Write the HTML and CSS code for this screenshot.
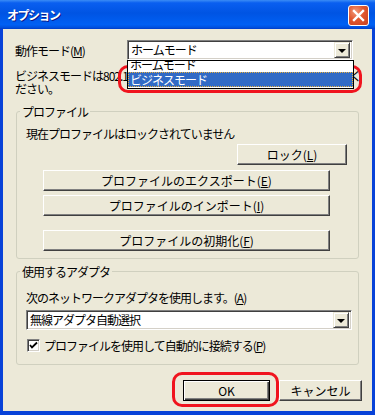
FILE: index.html
```html
<!DOCTYPE html>
<html lang="ja">

<head>
    <meta charset="UTF-8">
    <title>オプション</title>
    <link rel="stylesheet" href="styles.css">
</head>

<body>
    <div class="window">
        <div class="titlebar">
            <span class="title">オプション</span>
            <span class="close">
                <svg width="13" height="13" viewBox="0 0 13 13">
                    <path d="M2 2 L11 11 M11 2 L2 11" stroke="#fff" stroke-width="2.4" stroke-linecap="square" />
                </svg>
            </span>
        </div>
        <div class="client">
            <div class="mode-row">
                <span class="label">動作モード(<u>M</u>)</span>
                <div class="combo mode-combo">
                    <span class="combo-text">ホームモード</span>
                    <span class="combo-btn"><i class="arrow"></i></span>
                    <div class="droplist">
                        <ul>
                            <li>ホームモード</li>
                            <li class="sel">ビジネスモード</li>
                        </ul>
                    </div>
                </div>
            </div>
            <div class="note">
                <div class="note-line">
                    <span class="note-text">ビジネスモードは802.1X認証を使用する場合に選択してく</span>
                    <span>く</span>
                </div>
                <div>ださい。</div>
            </div>

            <fieldset class="group profile">
                <legend>プロファイル</legend>
                <p class="status">現在プロファイルはロックされていません</p>
                <div class="lock-row"><button class="btn lock">ロック(<u>L</u>)</button></div>
                <button class="btn wide export">プロファイルのエクスポート(<u>E</u>)</button>
                <button class="btn wide import">プロファイルのインポート(<u>I</u>)</button>
                <button class="btn wide init">プロファイルの初期化(<u>F</u>)</button>
            </fieldset>

            <fieldset class="group adapter">
                <legend>使用するアダプタ</legend>
                <p class="adapter-text">次のネットワークアダプタを使用します。(<u>A</u>)</p>
                <div class="combo adapter-combo">
                    <span class="combo-text">無線アダプタ自動選択</span>
                    <span class="combo-btn"><i class="arrow"></i></span>
                </div>
                <label class="check-row">
                    <span class="checkbox">
                        <svg width="9" height="9" viewBox="0 0 9 9">
                            <path d="M1 4 L3 6.5 L8 1.5" stroke="#000" stroke-width="1.8" fill="none" />
                        </svg>
                    </span>
                    <span>プロファイルを使用して自動的に接続する(<u>P</u>)</span>
                </label>
            </fieldset>

            <div class="actions">
                <button class="btn ok">OK</button>
                <button class="btn cancel">キャンセル</button>
            </div>
        </div>
        <div class="mark mark-list"></div>
        <div class="mark mark-ok"></div>
    </div>
</body>

</html>
```

FILE: styles.css
```css
body {
    margin: 0;
}

.window {
    width: 375px;
    height: 415px;
    display: flex;
    flex-direction: column;
    position: relative;
    font: 12px "Noto Sans CJK JP", sans-serif;
    letter-spacing: -1px;
    color: #000;
}

.titlebar {
    height: 29px;
    flex: none;
    display: flex;
    align-items: center;
    justify-content: space-between;
    padding: 0 6px 0 7px;
    background: linear-gradient(to bottom, #3b8cf5 0%, #0a5ff0 10%, #0054e3 45%, #0060f4 85%, #0052e0 94%, #003cc8 100%);
}

.title {
    color: #fff;
    font-weight: bold;
    font-size: 12px;
    letter-spacing: -1.5px;
    text-shadow: 1px 1px #0a1a8a;
}

.close {
    width: 19px;
    height: 19px;
    border: 1px solid #fff;
    border-radius: 3px;
    display: flex;
    align-items: center;
    justify-content: center;
    background: radial-gradient(circle at 35% 30%, #f29a7a 0%, #e0572f 45%, #c8401f 100%);
    margin-top: 2px;
}

.client {
    flex: 1;
    background: #ece9d8;
    border: solid #0842d8;
    border-width: 0 3px 4px;
    padding: 0 13px 0 12px;
}

.mode-row {
    display: flex;
    align-items: center;
    margin-top: 11px;
}

.combo {
    position: relative;
    height: 20px;
    box-sizing: border-box;
    background: #fff;
    border: 1px solid;
    border-color: #808080 #fff #fff #808080;
    box-shadow: inset 1px 1px #404040, inset -1px -1px #d4d0c8;
    display: flex;
    align-items: center;
    padding: 0 2px 0 3px;
}

.combo-text {
    flex: 1;
    line-height: 16px;
}

.combo-btn {
    width: 16px;
    height: 16px;
    box-sizing: border-box;
    background: #ece9d8;
    border: 1px solid;
    border-color: #ece9d8 #404040 #404040 #ece9d8;
    box-shadow: inset 1px 1px #fff, inset -1px -1px #808080;
    display: flex;
    align-items: center;
    justify-content: center;
}

.arrow {
    width: 0;
    height: 0;
    border-left: 4px solid transparent;
    border-right: 4px solid transparent;
    border-top: 4px solid #000;
    margin-top: 1px;
}

.mode-combo {
    margin-left: auto;
    margin-right: 6px;
    width: 226px;
}

.droplist {
    position: absolute;
    left: -1px;
    top: 19px;
    width: 227px;
    height: 29px;
    box-sizing: border-box;
    border: 1px solid #000;
    background: #fff;
    overflow: hidden;
    z-index: 2;
}

.droplist ul {
    list-style: none;
    margin: -4px 0 0;
    padding: 0;
}

.droplist li {
    height: 15px;
    line-height: 15px;
    padding-left: 2px;
}

.droplist .sel {
    background: #316ac5;
    color: #fff;
    outline: 1px dotted #e8b040;
    outline-offset: -1px;
}

.note {
    margin-top: 9px;
    line-height: 13px;
    width: 346px;
}

.note-line {
    display: flex;
    justify-content: space-between;
}

.note-text {
    white-space: nowrap;
    overflow: hidden;
    width: 300px;
}

.group {
    margin: 0 0 0 1px;
    padding: 0 6px 0 9px;
    border: 1px solid #d0d0bf;
    border-radius: 3px;
    min-width: 0;
}

.group legend {
    margin-left: -6px;
    padding: 0 2px;
    line-height: 13px;
}

.group p {
    margin: 0;
    line-height: 13px;
}

.profile {
    margin-top: 10px;
    padding-bottom: 7px;
}

.status {
    margin-top: 9px !important;
}

.btn {
    display: block;
    height: 21px;
    box-sizing: border-box;
    font: inherit;
    color: #000;
    background: #ece9d8;
    border: 1px solid;
    border-color: #fff #404040 #404040 #fff;
    box-shadow: inset -1px -1px #808080;
    padding: 0;
    line-height: 17px;
}

.lock-row {
    display: flex;
    justify-content: flex-end;
    margin-top: 4px;
}

.lock {
    width: 110px;
    margin-right: 5px;
}

.wide {
    width: 287px;
    margin-left: 17px;
}

.export {
    margin-top: 5px;
}

.import {
    margin-top: 4px;
}

.init {
    margin-top: 14px;
}

.adapter {
    margin-top: 6px;
    padding-bottom: 12px;
}

.adapter-text {
    margin-top: 13px !important;
}

.adapter-combo {
    margin-top: 6px;
}

.check-row {
    display: flex;
    align-items: center;
    margin-top: 9px;
    line-height: 13px;
}

.checkbox {
    width: 13px;
    height: 13px;
    box-sizing: border-box;
    margin: 0 4px 0 1px;
    background: #fff;
    border: 1px solid;
    border-color: #808080 #fff #fff #808080;
    box-shadow: inset 1px 1px #404040, inset -1px -1px #d4d0c8;
    display: flex;
    align-items: center;
    justify-content: center;
}

.actions {
    display: flex;
    justify-content: flex-end;
    gap: 9px;
    margin-top: 15px;
    margin-right: -3px;
}

.ok {
    width: 87px;
    border-color: #000;
    box-shadow: inset 1px 1px #fff, inset -1px -1px #404040, inset -2px -2px #808080;
}

.cancel {
    width: 83px;
}

.mark {
    position: absolute;
    border: 3px solid #f0141e;
    border-radius: 10px;
    box-sizing: border-box;
}

.mark-list {
    left: 118px;
    top: 65px;
    width: 244px;
    height: 28px;
}

.mark-ok {
    left: 172px;
    top: 372px;
    width: 107px;
    height: 35px;
}
```
